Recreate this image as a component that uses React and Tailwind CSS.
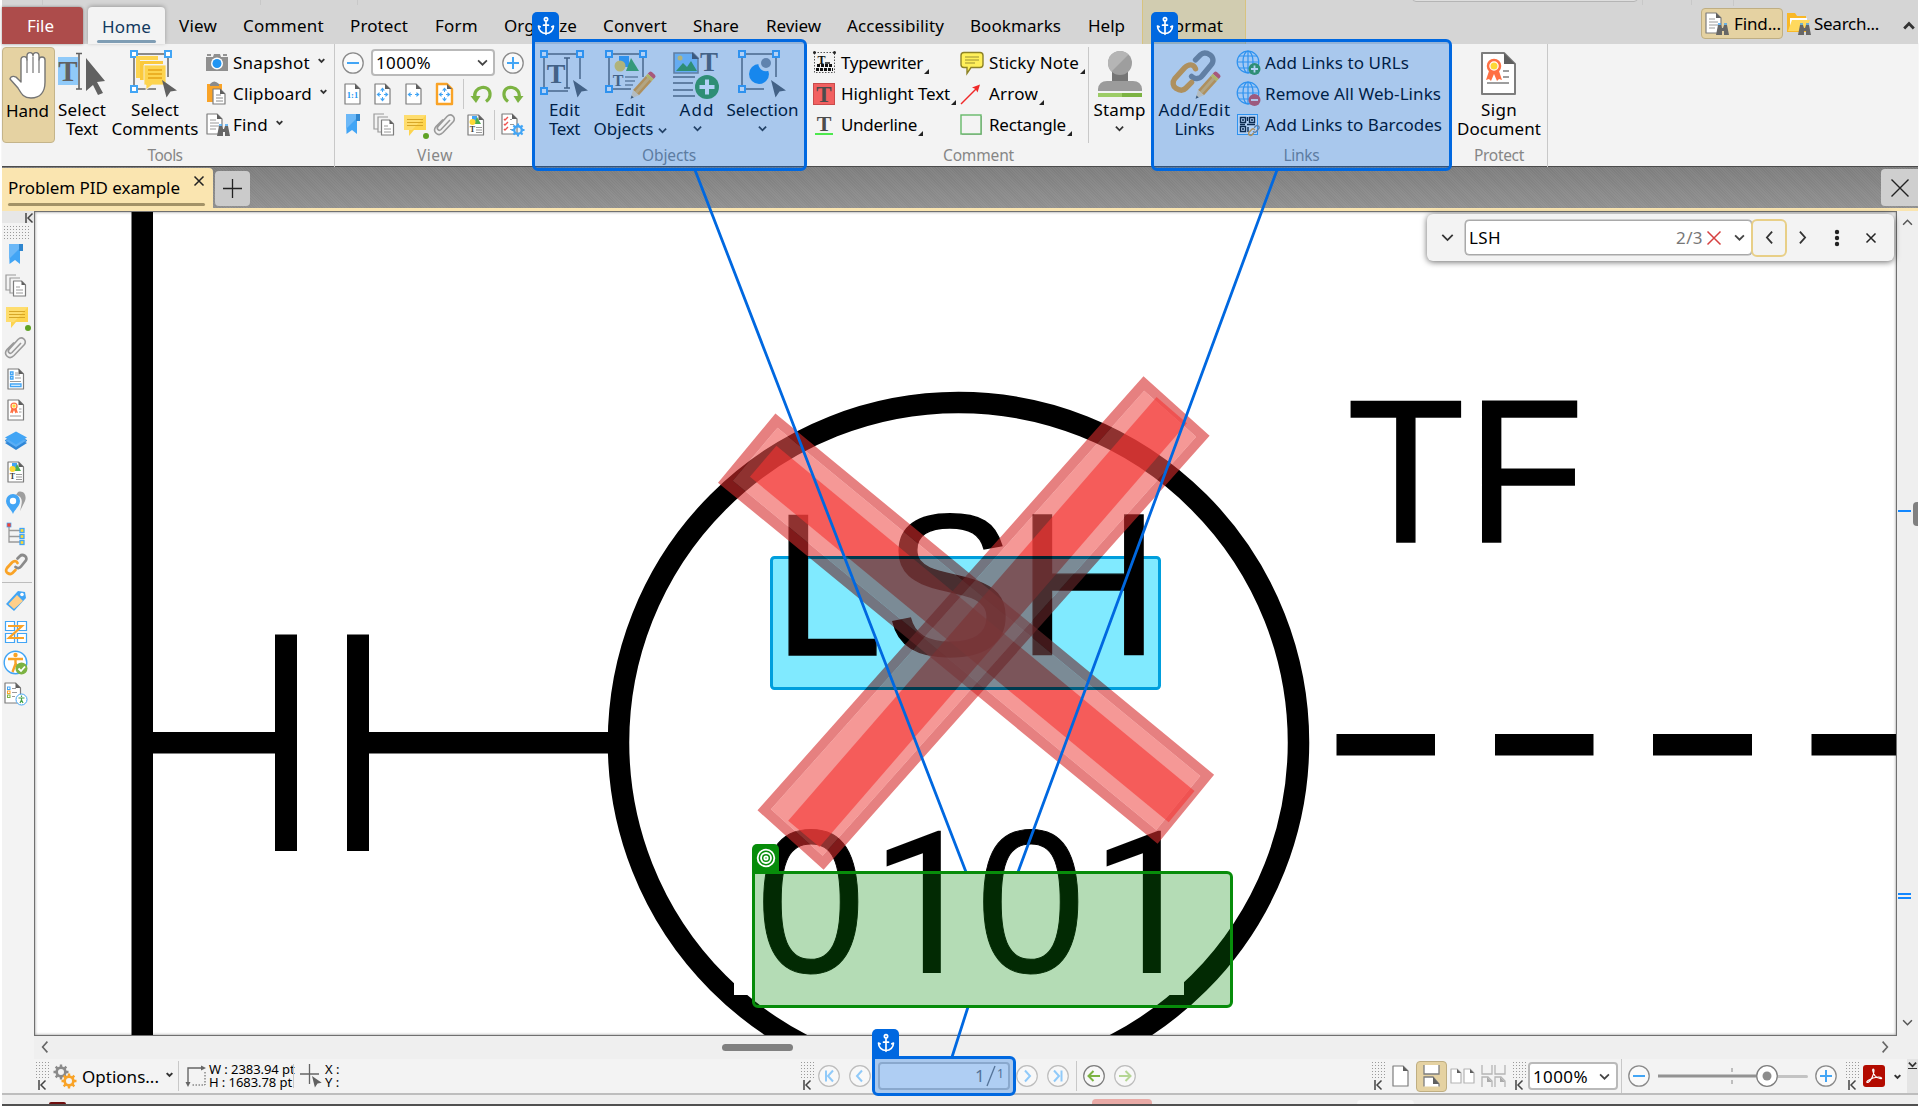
import { useLayoutEffect, useRef, useState } from "react";
import { Anchor, Target } from "lucide-react";

const GRAY = "#7d7d7d";
const BLUE = "#42a5f5";

/* Label whose tracking is adjusted so that it fills a given width. */
function T({ w, className = "", children }) {
  const ref = useRef(null);
  const [ls, setLs] = useState(0);
  useLayoutEffect(() => {
    const n = String(children).length;
    setLs((w - ref.current.getBoundingClientRect().width) / n);
  }, []);
  return (
    <span ref={ref} className={"inline-block shrink-0 whitespace-nowrap " + className} style={{ letterSpacing: ls + "px" }}>
      {children}
    </span>
  );
}

function Svg({ w, h, className = "", children }) {
  return (
    <svg width={w} height={h} viewBox={`0 0 ${w} ${h}`} fill="none" className={"shrink-0 overflow-visible " + className}>
      {children}
    </svg>
  );
}

function Chev({ s = 8, d = "down", color = "#333", sw = 1.8, className = "" }) {
  const p = {
    down: "M1 3 L5 7 L9 3",
    up: "M1 7 L5 3 L9 7",
    left: "M7 0.5 L3 5 L7 9.5",
    right: "M3 0.5 L7 5 L3 9.5",
  }[d];
  return (
    <svg width={s} height={s} viewBox="0 0 10 10" fill="none" className={"shrink-0 overflow-visible " + className}>
      <path d={p} stroke={color} strokeWidth={(sw * 10) / s} />
    </svg>
  );
}

function Cross({ s, color = "#222", sw = 1.5, className = "" }) {
  return (
    <Svg w={s} h={s} className={className}>
      <path d={`M0.5 0.5 L${s - 0.5} ${s - 0.5} M${s - 0.5} 0.5 L0.5 ${s - 0.5}`} stroke={color} strokeWidth={sw} />
    </Svg>
  );
}

/* Sheet of paper with a folded corner. */
function Sheet({ x = 0.5, y = 0.5, w = 15, h = 20, f = 5, stroke = GRAY, sw = 1.2, fill = "#fff" }) {
  return (
    <g>
      <path d={`M${x} ${y} h${w - f} l${f} ${f} v${h - f} h${-w} z`} fill={fill} stroke={stroke} strokeWidth={sw} strokeLinejoin="round" />
      <path d={`M${x + w - f} ${y} v${f} h${f} z`} fill="#5f5f5f" />
    </g>
  );
}

const Arrow = ({ x, y, k = 1, fill = "#616161" }) => (
  <path transform={`translate(${x} ${y}) scale(${k})`} d="M0 0 L15 10.5 L8.5 11.5 L4.5 17.5 Z" fill={fill} />
);

const Handles = ({ x, y, w, h }) => (
  <g>
    <path d={`M${x} ${y} H${x + w} V${y + h - 12} M${x} ${y} V${y + h} H${x + w - 12}`} stroke="#8a8a8a" strokeWidth="2" />
    {[[x, y], [x + w, y], [x, y + h]].map(([a, b]) => (
      <rect key={a + "-" + b} x={a - 3} y={b - 3} width="6" height="6" fill="#fff" stroke={BLUE} strokeWidth="2" />
    ))}
  </g>
);

const Pencil = ({ x, y }) => (
  <g transform={`translate(${x} ${y}) rotate(42)`}>
    <path d="M-4 -13v-2q0-2 2-2h4q2 0 2 2v2z" fill="#ef5350" />
    <rect x="-4" y="-13" width="8" height="3" fill="#fdd835" />
    <rect x="-4" y="-10" width="8" height="19" fill="#f9a327" />
    <rect x="-1.500" y="-10" width="3" height="19" fill="#ffc15c" />
    <path d="M-4 9 H4 L0 17 Z" fill="#ffe0b2" />
    <path d="M-1.500 14 H1.500 L0 17 Z" fill="#555" />
  </g>
);

const Binoc = ({ x, y }) => (
  <g transform={`translate(${x} ${y})`}>
    <path d="M2 2 h3 l1 3 h1 l1 -3 h3 l2 10 h-5 v-4 h-2 v4 h-6 z" fill="#666" />
    <path d="M2 1 h3 M8 1 h3" stroke={BLUE} strokeWidth="1.5" />
  </g>
);

const SerifT = ({ x, y, s, fill = "#616161" }) => (
  <text x={x} y={y} fontSize={s} fill={fill} fontWeight="bold" textAnchor="middle" fontFamily="Liberation Serif, serif">T</text>
);

/* ---------- large ribbon icons ---------- */
const HandIcon = () => (
  <Svg w={38} h={49}>
    <path d="M1 28c1-4 6-3 8 0l3 3V9c0-4.500 6-4.500 6 0V5c0-4.500 6-4.500 6 0v0c0-4.500 6-4.500 6 0v4c0-4 6-4 6 0V31c0 10-5 16-14 16-8 0-10-5-13-10z" fill="#fff" stroke="#757575" strokeWidth="1.4" strokeLinejoin="round" />
    <path d="M18 8V22M24 6V22M30 8V22" stroke="#8a8a8a" strokeWidth="1.4" />
  </Svg>
);
const SelectTextIcon = () => (
  <Svg w={50} h={46}>
    <rect x="1" y="7" width="20" height="28" fill="#90caf9" />
    <SerifT x="11" y="31" s="29" />
    <path d="M19 3.500h6M19 39h6M22 3.500v35.500" stroke="#616161" strokeWidth="1.6" />
    <path d="M29 8 L48 31 L40 32 L46 43 L41 45 L36 35 L29 41 Z" fill="#616161" />
  </Svg>
);
const SelectCommentsIcon = () => (
  <Svg w={50} h={50}>
    <Handles x={4} y={4} w={34} h={35} />
    <path d="M6 6h22v4h-18v18h-4z" fill="#fdd44f" />
    <path d="M10 11h23v3h-19v16h-4z" fill="#fbc93c" />
    <path d="M14 15h22v20h-14l-6 5v-5h-2z" fill="#fdd44f" stroke="#f3f3f3" strokeWidth=".8" />
    <path d="M18 20h14M18 24h14M18 28h14" stroke="#e6a417" strokeWidth="1.5" />
    <Arrow x={32} y={30} />
  </Svg>
);
const EditTextIcon = () => (
  <Svg w={50} h={50}>
    <Handles x={4} y={4} w={36} h={37} />
    <SerifT x="16" y="33" s="28" />
    <path d="M24 8h6M24 38h6M27 8v30" stroke="#616161" strokeWidth="1.6" />
    <Arrow x={33} y={30} />
  </Svg>
);
const EditObjectsIcon = () => (
  <Svg w={50} h={50}>
    <Handles x={4} y={4} w={34} h={35} />
    <rect x="14" y="6" width="10" height="11" fill={BLUE} />
    <path d="M26 8l8 13h-13z" fill="#4caf50" />
    <circle cx="15" cy="16" r="5.500" fill="#fdd44f" />
    <SerifT x="13" y="36" s="16" />
    <path d="M20 27h13M20 31h10M20 35h8" stroke="#8a8a8a" strokeWidth="1.5" />
    <Pencil x={37} y={36} />
  </Svg>
);
const AddIcon = () => (
  <Svg w={48} h={50}>
    <path d="M1 3h19l5 5v15h-24z" fill="#90caf9" stroke="#8a8a8a" strokeWidth="1.6" />
    <path d="M3 21l7-8 4 4 4-6 6 10z" fill="#43a047" />
    <circle cx="7" cy="8" r="2.500" fill="#fdd44f" />
    <path d="M19 2l7 7h-7z" fill="#555" />
    <SerifT x="36" y="21" s="27" />
    <path d="M0 27h22M0 33h20M0 40h20M0 46h22" stroke="#8a8a8a" strokeWidth="1.8" />
    <circle cx="34" cy="37" r="12" fill="#43a047" />
    <path d="M34 29.500v15M26.500 37h15" stroke="#fff" strokeWidth="4" />
  </Svg>
);
const SelectionIcon = () => (
  <Svg w={50} h={50}>
    <Handles x={4} y={4} w={34} h={35} />
    <circle cx="21" cy="24" r="10" fill="#2196f3" />
    <circle cx="28" cy="13.500" r="7.800" fill="#f3f3f3" />
    <circle cx="28" cy="13" r="5" fill="#8a9099" />
    <Arrow x={33} y={30} />
  </Svg>
);
const StampIcon = () => (
  <Svg w={46} h={50}>
    <path d="M15 22h16v10h-16z" fill="#757575" />
    <circle cx="23" cy="13" r="12" fill="#9e9e9e" />
    <path d="M14.500 21.500a12 12 0 0 1 17-17z" fill="#b5b5b5" />
    <path d="M1 41v-2q1-8 9-8h26q8 0 9 8v2z" fill="#9b9b9b" />
    <rect x="1" y="43" width="44" height="4" fill="#7cb342" />
    <rect x="1" y="43" width="24" height="4" fill="#9ccc65" />
  </Svg>
);
const LinkGlyph = ({ k = 1 }) => (
  <g transform={`scale(${k})`} strokeLinecap="round">
    <path d="M25 9l5-5c3-3 7-2 10 0s4 7 1 10l-9 11c-3 4-8 4-11 1" stroke="#8a8a8a" strokeWidth="5.500" />
    <path d="M25 18c-2-5-7-5-11-1l-10 11c-3 4-2 8 1 10s7 3 10 0l6-6" stroke="#f9a327" strokeWidth="5.500" />
  </g>
);
const LinksIcon = () => (
  <Svg w={50} h={50}>
    <g transform="translate(1 1)"><LinkGlyph k={0.98} /></g>
    <Pencil x={37} y={36} />
  </Svg>
);
const Ribbon = ({ x, y, k = 1 }) => (
  <g transform={`translate(${x} ${y}) scale(${k})`}>
    <path d="M-5 5l-3 9 3-1 2 2 3-7 3 7 2-2 3 1-3-9z" fill="#ff7043" />
    <circle r="6" fill="#fff" stroke="#ff7043" strokeWidth="2.500" />
    <circle r="3.500" fill="#fdd835" />
  </g>
);
const SignIcon = () => (
  <Svg w={36} h={44}>
    <Sheet x={1} y={1} w={33} h={41} f={11} sw={2} />
    <Ribbon x={13} y={14} />
    <path d="M22 19h6M22 25h6M6 31h22" stroke="#9e9e9e" strokeWidth="1.8" />
  </Svg>
);

/* ---------- small icons ---------- */
const Camera = () => (
  <Svg w={22} h={18}>
    <path d="M0 3h7l1-3h6l1 3h7v14h-22z" fill="#8f8f8f" />
    <path d="M1 1h4M17 1h4" stroke="#757575" strokeWidth="1.5" />
    <circle cx="11" cy="9.500" r="6" fill="#fff" />
    <circle cx="11" cy="9.500" r="4.500" fill="#2196f3" />
  </Svg>
);
const Clipboard = () => (
  <Svg w={22} h={25}>
    <path d="M1 3h15v18h-15z" fill="#f9a327" />
    <path d="M4 3q4-5 9 0v2h-9z" fill="#8a8a8a" />
    <Sheet x={7} y={8} w={12} h={15} f={5} />
    <path d="M10 14h5M10 17h7M10 20h7" stroke="#8a8a8a" />
  </Svg>
);
const FindDoc = () => (
  <Svg w={24} h={24}>
    <Sheet x={1} y={1} w={15} h={20} f={5} />
    <path d="M4 7h6M4 10h9M4 13h9M4 16h6" stroke="#9a9a9a" />
    <Binoc x={11} y={11} />
  </Svg>
);
const FolderFind = () => (
  <Svg w={24} h={24}>
    <path d="M0 1h8l2 3h9v16h-19z" fill="#f9b827" />
    <path d="M3 6h17v10h-17z" fill="#fff" />
    <path d="M5 8h18l-5 11h-17z" fill="#ffd95e" />
    <Binoc x={11} y={11} />
  </Svg>
);
const ZoomBtn = ({ plus, c = BLUE, s = 22 }) => (
  <Svg w={s} h={s}>
    <circle cx={s / 2} cy={s / 2} r={s / 2 - 0.8} fill="#fafafa" stroke="#8a8a8a" strokeWidth="1.3" />
    <path d={`M5 ${s / 2}H${s - 5}` + (plus ? ` M${s / 2} 5V${s - 5}` : "")} stroke={c} strokeWidth="2" />
  </Svg>
);
const PageFit = ({ kind }) => (
  <Svg w={17} h={22}>
    <Sheet x={1} y={1} w={15} h={20} f={5} fill="#fff" stroke={kind === "box" ? "#f9a327" : GRAY} sw={kind === "box" ? 2.4 : 1.2} />
    {kind === "one" ? (
      <text x="8.500" y="14.500" fontSize="8.500" textAnchor="middle" fill="#2196f3" fontWeight="bold" fontFamily="Liberation Serif, serif">1:1</text>
    ) : (
      <g fill={BLUE}>
        <path d="M2.500 11.500l3-2.500v2h1.500v1h-1.500v2zM14.500 11.500l-3-2.500v2h-1.500v1h1.500v2z" />
        {kind !== "width" && <path d="M8.500 4.500l-2.500 3h2v1.500h1v-1.500h2zM8.500 18.500l-2.500-3h2v-1.500h1v1.500h2z" />}
      </g>
    )}
  </Svg>
);
const Turn = ({ flip }) => (
  <Svg w={22} h={20} className={flip ? "-scale-x-100" : ""}>
    <path d="M5 14c-3-12 16-15 15-3 0 3-2 5-4 6.500" stroke="#7cb342" strokeWidth="3.200" />
    <path d="M0.500 12h10l-4.500 7z" fill="#7cb342" />
  </Svg>
);
const Bookmark = () => (
  <Svg w={16} h={21}>
    <path d="M1 0h11v20l-5-4-5.500 4z" fill={BLUE} />
    <path d="M1 0h11v4l-11 11z" fill="#6cb8f7" />
    <path d="M11 0h4v7h-4z" fill="#2f86cf" />
  </Svg>
);
const Pages = () => (
  <Svg w={22} h={23}>
    <path d="M5 16h-4v-15h10M9 19h-4v-15h10" stroke="#9a9a9a" strokeWidth="1.2" />
    <Sheet x={8.5} y={7} w={12} h={15} f={4} />
    <path d="M11 13h4M11 16h7M11 19h7" stroke="#9a9a9a" />
  </Svg>
);
const CommentIcon = () => (
  <Svg w={26} h={25}>
    <path d="M1 1h22v15h-12l-5 6v-6h-5z" fill="#fdd44f" />
    <path d="M1 1h22l-14 15h-8z" fill="#fedd6e" />
    <path d="M4 5.500h16M4 8.500h16M4 11.500h16" stroke="#d7a627" strokeWidth="1.2" />
    <circle cx="23" cy="22" r="3" fill="#5fa325" />
  </Svg>
);
const Clip = () => (
  <Svg w={24} h={23}>
    <path d="M17 7l-9 9.500c-2 2-5-.5-3-3l9-10c4-4 10 1 6 5.500l-10 10.500c-5 5-11-1-7-6l7-7" stroke="#9a9a9a" strokeWidth="1.6" />
  </Svg>
);
const ObjDoc = () => (
  <Svg w={18} h={22}>
    <Sheet x={1} y={1} w={15.5} h={20} f={5} />
    <rect x="5" y="2" width="5" height="5" fill={BLUE} />
    <path d="M10 3l4 7h-7z" fill="#4caf50" />
    <circle cx="5.500" cy="8" r="3" fill="#fdd835" />
    <SerifT x="5.500" y="18" s="8" fill="#444" />
    <path d="M9 13.500h6M9 16h6M9 18.500h6" stroke="#9a9a9a" />
  </Svg>
);
const GearGlyph = ({ x, y, r, c }) => (
  <g transform={`translate(${x} ${y})`}>
    <circle r={r * 0.58} stroke={c} strokeWidth={r * 0.36} />
    {[0, 45, 90, 135].map((a) => (
      <path key={a} transform={`rotate(${a})`} d={`M0 ${-r}V${-r * 0.65}M0 ${r}V${r * 0.65}`} stroke={c} strokeWidth={r * 0.32} />
    ))}
  </g>
);
const ListGear = () => (
  <Svg w={24} h={24}>
    <Sheet x={1} y={1} w={15} h={20} f={5} />
    <path d="M3 6l1 1 3-3M3 11l1 1 3-3M3 16l1 1 3-3" stroke="#ef5350" strokeWidth="1.4" />
    <path d="M9 6.500h2M9 11.500h4M9 16.500h3" stroke="#9a9a9a" />
    <GearGlyph x={17} y={17} r={6.5} c={BLUE} />
  </Svg>
);
const Typewriter = () => (
  <Svg w={23} h={23}>
    <rect x="1.500" y="1.500" width="20" height="20" stroke="#555" strokeDasharray="1.5 1.5" />
    <circle cx="1.500" cy="1.500" r="1.500" fill="#222" /><circle cx="21.500" cy="1.500" r="1.500" fill="#222" />
    <SerifT x="8.500" y="12.500" s="12" fill="#111" />
    <path d="M12 12h5" stroke="#111" strokeWidth="1.4" />
    <path d="M4 14.500h15M3 18.500h17" stroke="#111" strokeWidth="3" strokeDasharray="3 1" />
  </Svg>
);
const Highlight = () => (
  <Svg w={22} h={22}>
    <rect x=".5" y=".5" width="21" height="21" fill="#f26060" stroke="#c94b4b" />
    <SerifT x="11" y="19" s="23" fill="#4c4c4c" />
  </Svg>
);
const Underline = () => (
  <Svg w={22} h={22}>
    <SerifT x="11" y="17" s="22" fill="#4c4c4c" />
    <path d="M2 20h18" stroke="#24e524" strokeWidth="1.6" />
  </Svg>
);
const Sticky = () => (
  <Svg w={24} h={24}>
    <path d="M4 1.500h16q3 0 3 3v9q0 3-3 3h-9l-4 6v-6h-3q-3 0-3-3v-9q0-3 3-3z" fill="#fff05a" stroke="#8d8226" strokeWidth="1.4" />
    <path d="M5 6h14M5 9h14M5 12h10" stroke="#9c9030" strokeWidth="1.2" />
  </Svg>
);
const ArrowIcon = () => (
  <Svg w={22} h={22}>
    <path d="M1 21L18 4" stroke="#f02828" strokeWidth="1.5" />
    <path d="M20 1.500l-2.500 8-2-3.500-3.500-1.500z" fill="#f02828" />
  </Svg>
);
const RectIcon = () => (
  <Svg w={22} h={22}>
    <path d="M2 20.500h19.500V2" stroke="#aaa" />
    <rect x="1" y="1" width="20" height="19" fill="#f3f3f3" stroke="#65b868" strokeWidth="1.4" />
  </Svg>
);
const Globe = ({ minus }) => (
  <Svg w={25} h={26}>
    <g stroke={BLUE} strokeWidth="1.200">
      <circle cx="12" cy="12" r="10.800" fill="#e8f3fd" />
      <ellipse cx="12" cy="12" rx="5" ry="10.800" />
      <path d="M12 1v22M1 12h22M3 6h18M3 18h18" />
    </g>
    <circle cx="18.500" cy="19" r="6" fill={minus ? "#e05353" : "#43a047"} />
    <path d={minus ? "M15 19h7" : "M15 19h7M18.500 15.500v7"} stroke="#fff" strokeWidth="1.800" />
  </Svg>
);
const QR = () => (
  <Svg w={24} h={24}>
    <rect x="1.500" y="1.500" width="20" height="20" fill="#fff" stroke={BLUE} />
    <path d="M4.500 4.500h5v5h-5zM13.500 4.500h5v5h-5zM4.500 13.500h5v5h-5z" stroke="#111" strokeWidth="1.400" />
    <path d="M6 7h2M15 7h2M6 16h2M11.500 4v4M11 11.500h8M4 11.500h5M12 14v5" stroke="#111" strokeWidth="1.400" />
    <g transform="translate(12 12)"><LinkGlyph k={0.26} /></g>
  </Svg>
);

/* ---------- ribbon pieces ---------- */
function Group({ className, label, w, labelClass = "", children }) {
  return (
    <section className={"flex h-[123px] shrink-0 flex-col " + className}>
      <div className="flex h-[99px] pt-[3px]">{children}</div>
      <div className={"flex h-6 items-center justify-center pt-[2px] text-[15.5px] text-[#868686] " + labelClass}>
        <T w={w}>{label}</T>
      </div>
    </section>
  );
}
function Big({ className, icon, lines, chev }) {
  return (
    <div className={"flex h-[96px] shrink-0 flex-col items-center pt-[3px] " + className}>
      <div className="flex h-[50px] items-start justify-center">{icon}</div>
      {lines.map(([t, w], i) => (
        <div key={t} className="flex h-[19px] items-center gap-1 leading-[19px]">
          <T w={w}>{t}</T>
          {chev === "inline" && i === 1 && <Chev s={9} className="mt-1" />}
        </div>
      ))}
      {chev === "below" && <Chev s={9} className="mt-[5px]" />}
    </div>
  );
}
const Row = ({ icon, box, label, w, chev, tri }) => (
  <div className="flex h-[31px] items-center">
    <div className={"flex shrink-0 items-center " + box}>{icon}</div>
    <T w={w} className="mt-px">{label}</T>
    {chev && <Chev s={7} className="ml-[8px] -mt-1" />}
    {tri && <span className="ml-px mt-[18px] h-0 w-0 border-b-[5px] border-l-[5px] border-b-[#222] border-l-transparent" />}
  </div>
);
const Sep = ({ className }) => <span className={"w-px shrink-0 bg-[#c8c8c8] " + className} />;

const TABS = [
  ["View", 38, "ml-[14px]"], ["Comment", 81, "ml-[26px]"], ["Protect", 58, "ml-[26px]"], ["Form", 43, "ml-[27px]"],
  ["Organize", 73, "ml-[26px]"], ["Convert", 64, "ml-[26px]"], ["Share", 46, "ml-[26px]"], ["Review", 55, "ml-[27px]"],
  ["Accessibility", 97, "ml-[26px]"], ["Bookmarks", 91, "ml-[26px]"], ["Help", 37, "ml-[27px]"],
];

function Header() {
  return (
    <header className="relative flex h-[44px] items-end bg-[#d5d5d5] text-[17px] text-black">
      <div className="absolute left-[1410px] top-[-6px] h-2 w-[226px] rounded-b border border-[#b5b5b5] bg-[#dedede]" />
      <div className="absolute left-[40px] top-0 flex h-[5px] w-[1693px]">
        <Sep className="h-[5px] bg-[#a6a6a6]" /><Sep className="ml-[217px] h-[5px] bg-[#a6a6a6]" /><Sep className="ml-[96px] h-[5px] bg-[#a6a6a6]" />
        <Sep className="ml-[1284px] h-[5px] bg-[#a6a6a6]" /><Sep className="ml-[48px] h-[5px] bg-[#a6a6a6]" /><Sep className="ml-[41px] h-[6px] bg-[#a6a6a6]" />
      </div>
      <div className="flex h-[37px] w-[81px] items-center justify-center rounded-tr bg-[#ad4c4b] pr-[4px] text-white shadow-[0_0_3px_#0006]">
        <T w={27} className="mt-px">File</T>
      </div>
      <div className="ml-[5px] flex h-[37px] w-[77px] flex-col items-center rounded-t bg-[#f3f3f3] text-[#12395f] shadow-[0_-1px_4px_#0004]">
        <T w={49} className="mt-[7px] leading-[26px]">Home</T>
        <span className="h-[3px] w-[59px] rounded bg-[#7f9db4]" />
      </div>
      {TABS.map(([t, w, m]) => (
        <div key={t} className={"flex h-[37px] items-center " + m}>
          <T w={w} className="mt-px">{t}</T>
        </div>
      ))}
      <div className="ml-[17px] flex h-[44px] w-[104px] items-center justify-center border-x border-[#d8c37f] bg-[#d1ccb0]">
        <T w={58} className="mt-[8px]">Format</T>
      </div>
      <div className="mb-[5px] ml-[455px] flex h-[31px] w-[82px] items-center rounded-sm border border-[#bfae82] bg-[#e5d2a2] pl-[3px]">
        <FindDoc /><T w={47} className="ml-[5px] mt-px">Find...</T>
      </div>
      <div className="mb-[5px] ml-[4px] flex h-[31px] items-center">
        <FolderFind /><T w={65} className="ml-[3px] mt-px">Search...</T>
      </div>
      <Chev s={12} d="up" sw={2.8} className="mb-[12px] ml-[24px]" />
    </header>
  );
}

function ComboZoom({ className }) {
  return (
    <div className={"flex shrink-0 items-center justify-between rounded border-2 border-[#b9b9b9] bg-white text-black " + className}>
      <T w={55} className="mt-px">1000%</T><Chev s={11} color="#444" sw={1.7} />
    </div>
  );
}

function RibbonBar() {
  return (
    <div className="flex h-[123px] border-b border-[#4b4b4b] bg-[#f3f3f3] text-[17px] text-black shadow-[0_-1px_1px_#0003]">
      <Group className="w-[332px]" label="Tools" w={35} labelClass="pr-[6px]">
        <Big className="w-[53px] rounded-sm border border-[#c4b48a] bg-[#e5d2a2] pr-[2px]" icon={<HandIcon />} lines={[["Hand", 43]]} />
        <Big className="w-[54px]" icon={<SelectTextIcon />} lines={[["Select", 48], ["Text", 32]]} />
        <Big className="w-[92px]" icon={<SelectCommentsIcon />} lines={[["Select", 48], ["Comments", 87]]} />
        <div className="flex flex-col pl-[5px]">
          <Row icon={<Camera />} box="w-[27px]" label="Snapshot" w={77} chev />
          <Row icon={<Clipboard />} box="w-[27px]" label="Clipboard" w={79} chev />
          <Row icon={<FindDoc />} box="w-[27px]" label="Find" w={35} chev />
        </div>
      </Group>
      <Group className="w-[201px] border-l border-[#c8c8c8]" label="View" w={36}>
        <div className="flex w-full flex-col pl-[7px]">
          <div className="flex h-[31px] items-center">
            <ZoomBtn /><ComboZoom className="ml-[7px] h-[27px] w-[124px] pl-[3px] pr-[5px]" /><span className="ml-[7px] flex"><ZoomBtn plus /></span>
          </div>
          <div className="flex h-[31px] items-center pl-[2px]">
            <PageFit kind="one" /><span className="w-[13px]" /><PageFit kind="all" /><span className="w-[14px]" /><PageFit kind="width" />
            <span className="w-[14px]" /><PageFit kind="box" /><Sep className="ml-[10px] h-[30px]" />
            <span className="ml-[6px] flex gap-[10px]"><Turn /><Turn flip /></span>
          </div>
          <div className="flex h-[31px] items-center pl-[3px]">
            <Bookmark /><span className="ml-[12px]"><Pages /></span><span className="ml-[8px] mt-1"><CommentIcon /></span>
            <span className="ml-[4px]"><Clip /></span><span className="ml-[10px]"><ObjDoc /></span>
            <Sep className="ml-[9px] h-[30px]" /><span className="ml-[6px]"><ListGear /></span>
          </div>
        </div>
      </Group>
      <Group className="w-[272px]" label="Objects" w={54} labelClass="pr-[4px]">
        <Big className="w-[59px]" icon={<EditTextIcon />} lines={[["Edit", 31], ["Text", 31]]} />
        <Big className="w-[72px]" icon={<EditObjectsIcon />} lines={[["Edit", 30], ["Objects", 60]]} chev="inline" />
        <Big className="w-[62px]" icon={<AddIcon />} lines={[["Add", 35]]} chev="below" />
        <Big className="w-[69px]" icon={<SelectionIcon />} lines={[["Selection", 72]]} chev="below" />
      </Group>
      <Group className="w-[345px]" label="Comment" w={71} labelClass="pr-[2px]">
        <div className="w-[153px] pl-[6px]">
          <Row icon={<Typewriter />} box="w-[28px]" label="Typewriter" w={82} tri />
          <Row icon={<Highlight />} box="w-[28px]" label="Highlight Text" w={109} tri />
          <Row icon={<Underline />} box="w-[28px]" label="Underline" w={76} tri />
        </div>
        <div className="w-[128px]">
          <Row icon={<Sticky />} box="w-[29px]" label="Sticky Note" w={90} tri />
          <Row icon={<ArrowIcon />} box="w-[29px]" label="Arrow" w={49} tri />
          <Row icon={<RectIcon />} box="w-[29px]" label="Rectangle" w={77} tri />
        </div>
        <Sep className="h-[96px]" />
        <Big className="w-[61px]" icon={<StampIcon />} lines={[["Stamp", 52]]} chev="below" />
      </Group>
      <Group className="w-[299px]" label="Links" w={36}>
        <Big className="w-[84px] pl-px" icon={<LinksIcon />} lines={[["Add/Edit", 72], ["Links", 40]]} />
        <div>
          <Row icon={<Globe />} box="w-[29px]" label="Add Links to URLs" w={144} />
          <Row icon={<Globe minus />} box="w-[29px]" label="Remove All Web-Links" w={176} />
          <Row icon={<QR />} box="w-[29px]" label="Add Links to Barcodes" w={177} />
        </div>
      </Group>
      <Group className="w-[97px] border-r border-[#c8c8c8]" label="Protect" w={50}>
        <Big className="w-[96px]" icon={<span className="pt-[2px]"><SignIcon /></span>} lines={[["Sign", 36], ["Document", 84]]} />
      </Group>
    </div>
  );
}

function DocTabs() {
  return (
    <div className="flex h-[44px] border-b-[3px] border-[#fae5b0] bg-[repeating-linear-gradient(45deg,#0000_0_1px,#ffffff0d_1px_2px),linear-gradient(#7d7d7d,#8f8f8f)]">
      <div className="relative z-10 mb-[-3px] mt-px flex h-[43px] w-[211px] flex-col rounded-tr bg-[#fae5b0] pl-[6px] text-[17px] text-black">
        <div className="flex h-[35px] items-center"><T w={172} className="mt-[5px]">Problem PID example</T><Cross s={10} className="mb-[9px] ml-[14px]" /></div>
        <span className="h-[3px] w-[197px] rounded bg-[#a39267]" />
      </div>
      <div className="ml-[2px] mt-[4px] flex h-[35px] w-[35px] items-center justify-center rounded bg-[#cbcbcb]">
        <Svg w={19} h={19}><path d="M0 9.500h19M9.500 0v19" stroke="#222" strokeWidth="1.300" /></Svg>
      </div>
      <div className="ml-auto mt-[2px] flex h-[37px] w-[37px] items-center justify-center rounded-l bg-[#cfcfcf]"><Cross s={18} sw={1.4} /></div>
    </div>
  );
}

/* ---------- side panel ---------- */
const FormDoc = () => (
  <Svg w={18} h={22}>
    <Sheet x={1} y={1} w={15.5} h={20} f={5} />
    <path d="M3.500 4h2.500v2.500h-2.500zM3.500 8.500h2.500v2.500h-2.500zM3.500 16h10.500v2.500h-10.500z" stroke={BLUE} strokeWidth="1.300" />
    <path d="M8 5h3M8 7h5M8 10h6M3 13.500h11" stroke="#9a9a9a" />
  </Svg>
);
const CertDoc = () => (
  <Svg w={18} h={22}>
    <Sheet x={1} y={1} w={15.5} h={20} f={5} />
    <Ribbon x={7} y={7} k={0.5} />
    <path d="M12 10h2.500M12 13h2.500M3 17h11" stroke="#9a9a9a" />
  </Svg>
);
const Layers = () => (
  <Svg w={24} h={20}>
    <path d="M1 12l11 7 11-7-11-6z" fill="#2f86d6" /><path d="M1 9.500l11 7 11-7-11-6z" fill="#5aaef5" stroke="#2f86d6" strokeWidth=".8" />
    <path d="M1 6.500l11 7 11-7-11-6z" fill="#42a5f5" />
  </Svg>
);
const Pins = () => (
  <Svg w={22} h={24}>
    <path d="M13 1c6-2 9 4 7 9l-5 10c2-8 4-14-4-16z" fill="#9e9e9e" />
    <path d="M8 3a7 7 0 0 1 7 7c0 5-5 8-7 13-2-5-7-8-7-13a7 7 0 0 1 7-7z" fill={BLUE} /><circle cx="8" cy="10" r="3.200" fill="#fff" />
  </Svg>
);
const Tree = () => (
  <Svg w={20} h={24}>
    <path d="M3 4v16h11M3 8.500h11M3 14.500h11" stroke="#9a9a9a" strokeWidth="1.300" />
    <rect x="1" y="1" width="4" height="4" fill="#f44336" stroke={BLUE} strokeWidth=".7" />
    {[6.5, 12.5, 18.5].map((y) => <rect key={y} x="14" y={y} width="4" height="4" fill="#fdd835" stroke={BLUE} strokeWidth="1.300" />)}
  </Svg>
);
const Tag = () => (
  <Svg w={22} h={22}>
    <path d="M1 14L13 1l7 1 1 6L9 21z" fill={BLUE} /><path d="M3.500 14l8.500-9 6 6-9 8z" fill="#ffcf8a" /><circle cx="17" cy="4.500" r="1.800" fill="#fff" />
  </Svg>
);
const Order = () => (
  <Svg w={24} h={24}>
    <path d="M1.500 1.500h9v9h-9zM13.500 1.500h9v9h-9zM1.500 13.500h9v9h-9zM13.500 13.500h9v9h-9z" fill="#fff" stroke={BLUE} strokeWidth="1.200" />
    <path d="M4 6h14L5 18h15" stroke="#f9a327" strokeWidth="2.200" />
  </Svg>
);
const Access = () => (
  <Svg w={26} h={26}>
    <circle cx="12.500" cy="12.500" r="11.300" fill="#fff" stroke={BLUE} strokeWidth="1.400" />
    <circle cx="12.500" cy="5" r="2.200" fill="#f9a327" /><path d="M5 9h15M12.500 9v5l-3 8M12.500 13l3 8" stroke="#f9a327" strokeWidth="2.400" />
    <circle cx="18.500" cy="18.500" r="6" fill="#7cb342" /><path d="M15.500 18.500l2.500 2.500 4-4.500" stroke="#fff" strokeWidth="1.800" />
  </Svg>
);
const AccessDoc = () => (
  <Svg w={24} h={24}>
    <Sheet x={1} y={1} w={15.5} h={20} f={5} />
    <rect x="3.500" y="5" width="2.500" height="2.500" stroke={BLUE} /><rect x="3.500" y="9" width="2.500" height="2.500" stroke="#f9a327" /><rect x="3.500" y="13" width="2.500" height="2.500" stroke="#7cb342" />
    <path d="M8 6.500h4M8 10.500h5M8 14.500h3" stroke="#9a9a9a" />
    <circle cx="17.500" cy="17.500" r="5.500" fill="#fff" stroke={BLUE} /><path d="M14.500 16h6M17.500 16v2l-1.500 3M17.500 18l1.500 3M17.500 13.500v1.500" stroke="#43a047" strokeWidth="1.200" />
  </Svg>
);
const SIDE = [Bookmark, Pages, CommentIcon, Clip, FormDoc, CertDoc, Layers, ObjDoc, Pins, Tree];
const SIDE2 = [Tag, Order, Access, AccessDoc];

const ToStart = () => (
  <Svg w={8} h={10}><path d="M1 0v10M7.500 0.500L3 5l4.500 4.500" stroke="#444" strokeWidth="1.500" /></Svg>
);
const Dots = ({ className }) => (
  <span className={"block bg-[radial-gradient(#9a9a9a_0.7px,#0000_0.9px)] bg-[length:3px_3px] " + className} />
);

function SidePanel() {
  return (
    <aside className="flex h-full w-[32px] flex-col bg-[#f3f3f3]">
      <div className="flex h-[12px] items-center justify-end bg-[#e7e7e7] pr-px pt-px"><ToStart /></div>
      <Dots className="ml-px mt-[2px] h-[14px] w-[28px]" />
      {SIDE.map((I, i) => (
        <div key={i} className={"flex h-[31px] w-[28px] items-center justify-center " + (i === 2 ? "pl-1 pt-1" : "")}><I /></div>
      ))}
      <div className="flex h-[31px] w-[28px] items-center justify-center"><Svg w={23} h={22}><LinkGlyph k={0.5} /></Svg></div>
      <span className="mt-[2px] h-px w-[30px] bg-[#bdbdbd]" />
      {SIDE2.map((I, i) => (
        <div key={i} className={"flex h-[31px] w-[28px] items-center justify-center " + (i === 0 ? "mt-[2px]" : "")}><I /></div>
      ))}
    </aside>
  );
}

/* ---------- drawing canvas: piping diagram in window coordinates ---------- */
const poly = (p) => "M" + p.map((c) => c.join(" ")).join("L") + "Z";
const A = {
  outer: [[775.4, 413.5], [1214.1, 774.7], [1157.6, 843.7], [718, 482.7]],
  inner: [[777.5, 427.7], [1200.3, 776], [1156.3, 830], [732.7, 480.7]],
  core: [[776.4, 445.7], [1194.5, 791], [1168.7, 822.3], [749.9, 476.7]],
};
const B = {
  outer: [[1143.5, 376.3], [1209.6, 435.7], [823.6, 869.7], [757.5, 810.3]],
  inner: [[1144.2, 390.7], [1196.2, 436.7], [822.6, 855.7], [770.9, 809.3]],
  core: [[1156.6, 397], [1186.9, 423.3], [819.5, 847], [788.2, 820.7]],
};
const Stroke = ({ s }) => (
  <g fillOpacity=".6">
    <path d={poly(s.outer) + poly(s.inner)} fillRule="evenodd" fill="#d52c2c" />
    <path d={poly(s.inner)} fill="#ef5350" />
    <path d={poly(s.core)} fill="#f53432" />
  </g>
);
const Glyph = ({ x, y, s, k = 1, sw = 0, font = "Liberation Sans, sans-serif", children }) => (
  <text transform={`translate(${x} ${y}) scale(${k} 1)`} fontSize={s} fontFamily={font} stroke="#000" strokeWidth={sw}>{children}</text>
);

function Drawing() {
  return (
    <svg width="1861" height="823" viewBox="35 212 1861 823" className="isolate block shrink-0 bg-white">
      <path d="M131.500 212h21.500v823h-21.500zM153 732h122v21.500h-122zM275 634.500h22v216.500h-22zM347 634.500h22v216.500h-22zM369 732h243v21.500h-243z" />
      <circle cx="958.500" cy="742.500" r="340" fill="none" stroke="#000" strokeWidth="21.500" />
      <rect x="734" y="830" width="450" height="165" fill="#fff" />
      <path d="M1336.500 734h98.500v21.500h-98.500zM1495 734h98.500v21.500h-98.500zM1653 734h99v21.500h-99zM1811.500 734h86v21.500h-86z" />
      <Glyph x={773} y={655.3} s={203} k={0.97} sw={1.4}>L</Glyph>
      <Glyph x={884} y={655.3} s={203} k={0.96} sw={1.4}>S</Glyph>
      <Glyph x={1017} y={655.3} s={203} k={0.97} sw={1.4}>H</Glyph>
      <Glyph x={1347} y={541.5} s={204} k={0.945} sw={1.6}>T</Glyph>
      <Glyph x={1467} y={541.5} s={204} k={0.94} sw={1.6}>F</Glyph>
      <Glyph x={756} y={972} s={204} k={0.965} sw={1}>0</Glyph>
      <Glyph x={870} y={973} s={199} font="Roboto, sans-serif">1</Glyph>
      <Glyph x={976} y={972} s={204} k={0.965} sw={1}>0</Glyph>
      <Glyph x={1090} y={973} s={199} font="Roboto, sans-serif">1</Glyph>
      <Stroke s={A} />
      <Stroke s={B} />
      <rect x="771.500" y="557.500" width="388" height="131" rx="3" fill="#80eaff" stroke="#009fdd" strokeWidth="3" className="mix-blend-multiply" />
    </svg>
  );
}

function FindBar() {
  return (
    <div className="absolute left-[1392px] top-[2px] flex h-[47px] w-[467px] items-center rounded-md bg-[#f3f3f3] text-[17px] text-black shadow-[0_1px_6px_#0009]">
      <Chev s={13} color="#333" className="ml-[14px]" />
      <div className="ml-[11px] flex h-[35px] w-[287px] items-center rounded border border-[#a9a9a9] bg-white pl-[3px] shadow-[0_0_0_0.5px_#aaa]">
        <T w={32} className="mt-px">LSH</T><span className="grow" /><T w={27} className="mt-px text-[#777]">2/3</T>
        <Cross s={14} color="#d64040" className="ml-[4px]" /><Chev s={11} color="#444" className="ml-[13px] mr-[6px]" />
      </div>
      <div className="-ml-px flex h-[38px] w-[36px] items-center justify-center rounded-md border-2 border-[#e8cf87]"><Chev s={13} d="left" /></div>
      <Chev s={13} d="right" className="ml-[9px]" />
      <Svg w={6} h={18} className="ml-[25px]"><circle cx="3" cy="3" r="2.200" fill="#222" /><circle cx="3" cy="9" r="2.200" fill="#222" /><circle cx="3" cy="15" r="2.200" fill="#222" /></Svg>
      <Cross s={10} className="ml-[26px]" />
    </div>
  );
}

function Workspace() {
  return (
    <div className="flex h-[848px] bg-[#f3f3f3]">
      <SidePanel />
      <div className="flex grow flex-col bg-[#efefef]">
        <div className="flex h-[825px]">
          <div className="relative border border-[#707070]">
            <Drawing />
            <span className="pointer-events-none absolute inset-0 shadow-[inset_0_0_3px_#0007]" />
            <FindBar />
          </div>
          <div className="flex w-[21px] flex-col items-center pt-[6px]">
            <Chev s={11} d="up" color="#555" sw={1.5} />
            <div className="mt-[274px] flex h-[24px] w-full items-center pl-px"><span className="-mt-[6px] h-[2px] w-[13px] bg-[#1287ff]" /><span className="ml-auto h-[24px] w-[5px] rounded-l bg-[#808080]" /></div>
            <div className="mt-[367px] flex w-full flex-col gap-[2px] pl-px"><span className="h-[2px] w-[13px] bg-[#1287ff]" /><span className="h-[2px] w-[13px] bg-[#1287ff]" /></div>
            <Chev s={11} color="#555" sw={1.5} className="mt-[118px]" />
          </div>
        </div>
        <div className="flex h-[23px] items-center pb-px pl-[5px] pr-[27px]">
          <Chev s={12} d="left" color="#666" sw={1.6} />
          <span className="ml-[671px] h-[7px] w-[71px] rounded bg-[#808080]" />
          <Chev s={12} d="right" color="#666" sw={1.6} className="ml-auto" />
        </div>
      </div>
    </div>
  );
}

/* ---------- status bar ---------- */
const Grip = ({ className = "" }) => (
  <div className={"flex h-[30px] w-[14px] shrink-0 flex-col items-center " + className}><Dots className="h-[17px] w-[14px]" /><span className="mt-[2px]"><ToStart /></span></div>
);
const Nav = ({ d, c = "#90caf9", ring = "#bdbdbd" }) => (
  <Svg w={22} h={22}>
    <circle cx="11" cy="11" r="10.300" fill="#f8f8f8" stroke={ring} strokeWidth="1.200" />
    <path d={d} stroke={c} strokeWidth="2" />
  </Svg>
);

function StatusBar() {
  return (
    <footer className="flex h-[34px] items-center bg-[#f3f3f3] pl-[33px] text-[17px] text-black">
      <Grip />
      <Svg w={24} h={25} className="ml-[4px]"><GearGlyph x={8} y={8} r={7.5} c="#8a8a8a" /><GearGlyph x={16} y={17} r={7.5} c="#f9a327" /></Svg>
      <T w={77} className="ml-[5px] mt-px">Options...</T>
      <Chev s={7} sw={2} className="ml-[7px] -mt-1" />
      <Sep className="ml-[5px] h-[30px]" />
      <Svg w={22} h={24} className="ml-[6px]">
        <path d="M3 20V4h14" stroke="#666" strokeWidth="1.400" /><path d="M16 1.500l5 2.500-5 2.500zM0.500 18h5l-2.500 5z" fill="#666" />
        <path d="M20 8v13h-13" stroke="#555" strokeDasharray="1.500 1.500" />
      </Svg>
      <div className="ml-[2px] flex w-[81px] shrink-0 flex-col pb-px text-[13px] leading-[13px]"><T w={80}>W : 2383.94 pt</T><T w={80}>H : 1683.78 pt</T></div>
      <Sep className="ml-[3px] h-[24px]" />
      <Svg w={22} h={24} className="ml-[6px]"><path d="M0 10h19M9.500 0v20" stroke="#666" strokeWidth="1.300" /><Arrow x={12} y={12} k={0.65} /></Svg>
      <div className="ml-[3px] flex w-[16px] shrink-0 flex-col pb-px text-[13px] leading-[13px]"><T w={16}>X :</T><T w={16}>Y :</T></div>
      <Grip className="ml-[459px]" />
      <span className="ml-[4px] flex gap-[9px]"><Nav d="M8 5.500v11M15 5.500l-5 5.500 5 5.500" /><Nav d="M13 5.500l-5 5.500 5 5.500" /></span>
      <div className="ml-[7px] flex h-[28px] w-[132px] shrink-0 items-center justify-end rounded border-2 border-[#c4c4c4] bg-[#fbfbfb] pr-[4px] text-[#777]">
        <T w={9}>1</T>
        <Svg w={10} h={20} className="ml-[2px]"><path d="M9 0L1 20" stroke="#777" strokeWidth="1.300" /></Svg>
        <T w={7} className="mb-[5px] ml-[1px] text-[12px]">1</T>
      </div>
      <span className="ml-[6px] flex gap-[9px]"><Nav d="M9 5.500l5 5.500-5 5.500" /><Nav d="M7 5.500l5 5.500-5 5.500M14.500 5.500v11" /></span>
      <Sep className="ml-[7px] h-[30px]" />
      <span className="ml-[6px] flex gap-[9px]"><Nav c="#7cb342" ring="#7d7d7d" d="M17 11H6M10.500 6l-5 5 5 5" /><Nav c="#b5d694" d="M5 11h11M11.500 6l5 5-5 5" /></span>
      <Grip className="ml-[235px]" />
      <Svg w={17} h={22} className="ml-[7px]"><Sheet x={1} y={1} w={15} h={20} f={5} /></Svg>
      <div className="ml-[7px] flex h-[31px] w-[31px] shrink-0 items-center justify-center rounded-sm border border-[#bfae82] bg-[#e5d2a2]">
        <Svg w={17} h={24}><path d="M1 1v9h15V1" fill="#fff" stroke="#7d7d7d" strokeWidth="1.300" /><path d="M1 22.500V13h9l6 7v2.500" fill="#fff" stroke="#7d7d7d" strokeWidth="1.300" /><path d="M10 13v7h6z" fill="#5f5f5f" /></Svg>
      </div>
      <Svg w={26} h={16} className="ml-[3px]"><Sheet x={1} y={1} w={10} h={14} f={4} stroke="#b5b5b5" /><Sheet x={14} y={1} w={10} h={14} f={4} stroke="#b5b5b5" /></Svg>
      <Svg w={26} h={24} className="ml-[5px]"><path d="M1 1v9h10V1M14 1v9h10V1M1 23V13h6l4 4v6M14 23V13h6l4 4v6" stroke="#b5b5b5" strokeWidth="1.300" /><path d="M6 13v5h5zM19 13v5h5z" fill="#aaa" /></Svg>
      <Grip className="ml-[5px]" />
      <ComboZoom className="ml-[2px] h-[28px] w-[90px] pl-[3px] pr-[6px]" />
      <Sep className="ml-[3px] h-[34px]" />
      <span className="ml-[6px] flex"><ZoomBtn /></span>
      <div className="ml-[8px] flex shrink-0 items-center">
        <Svg w={98} h={24}><path d="M74 4v4M74 16v4" stroke="#888" /><path d="M0 12h98" stroke="#929292" strokeWidth="3" /></Svg>
        <Svg w={22} h={24}><circle cx="11" cy="12" r="10.300" fill="#fff" stroke="#7d7d7d" strokeWidth="1.300" /><circle cx="11" cy="12" r="4.500" fill="#8d8d8d" /></Svg>
        <span className="h-[3px] w-[30px] rounded-r bg-[#c3c3c3]" />
      </div>
      <span className="ml-[7px] flex"><ZoomBtn plus /></span>
      <Grip className="ml-[8px]" />
      <Svg w={22} h={22} className="ml-[4px]">
        <rect width="22" height="22" rx="3" fill="#b30b00" />
        <path d="M4.500 17.500c2.500-.5 6.500-7 6.500-12 0-2-1.600-2-1.300 0 .8 4.500 4 7.500 7.300 8s1-1.600-1.500-1.500c-4 .2-8 1.800-10.500 3.500-1.500 1-1.500 2.200-.5 2z" stroke="#fff" strokeWidth="1.200" />
      </Svg>
      <Chev s={7} sw={2} className="ml-[9px]" />
      <div className="ml-auto flex h-full w-[11px] flex-col items-center bg-[#e4e4e4] pt-[1px]"><Chev s={9} /><span className="mt-[-1px] h-px w-[9px] bg-[#333]" /></div>
    </footer>
  );
}

function Callout({ className, color = "border-[#0068e0] bg-[#0068e0]/30", badge = "bg-[#0068e0]", children }) {
  return (
    <div className={"absolute rounded-md rounded-tl-none border-[3px] " + color + " " + className}>
      <span className={"absolute left-[-3px] top-[-30px] flex h-[28px] w-[27px] items-center justify-center rounded-t-[5px] text-white " + badge}>{children}</span>
    </div>
  );
}

export default function App() {
  return (
    <div className="relative h-[1106px] w-[1920px] overflow-hidden bg-white px-[2px] font-['Noto_Sans','Open_Sans',sans-serif]">
      <Header />
      <RibbonBar />
      <DocTabs />
      <Workspace />
      <StatusBar />
      <div className="relative flex h-[13px] items-end overflow-hidden border-b-2 border-t-2 border-[#bdbdbd] border-b-[#505050] bg-[#eeeeee]">
        <span className="ml-[47px] h-[2px] w-[17px] rounded-t-full bg-[#701010]" />
        <span className="ml-[1026px] h-[5px] w-[60px] rounded-t bg-[#e9aaa6]" />
        <span className="ml-[205px] h-[4px] w-[57px] rounded-t bg-[#f7f7f7]" />
      </div>
      <svg width="1920" height="1106" viewBox="0 0 1920 1106" className="pointer-events-none absolute left-0 top-0">
        <path d="M695 170L966 872M1277 170L1018 872M968 1007L952 1057" stroke="#0068e0" strokeWidth="2.800" />
      </svg>
      <Callout className="left-[532px] top-[39px] h-[132px] w-[275px]"><Anchor size={20} strokeWidth={2} /></Callout>
      <Callout className="left-[1151px] top-[39px] h-[132px] w-[301px]"><Anchor size={20} strokeWidth={2} /></Callout>
      <Callout className="left-[872px] top-[1056px] h-[40px] w-[144px]"><Anchor size={20} strokeWidth={2} /></Callout>
      <Callout className="left-[752px] top-[871px] h-[137px] w-[481px]" color="border-[#078c0a] bg-[#078c0a]/30" badge="bg-[#078c0a]"><Target size={20} strokeWidth={2.2} /></Callout>
    </div>
  );
}
